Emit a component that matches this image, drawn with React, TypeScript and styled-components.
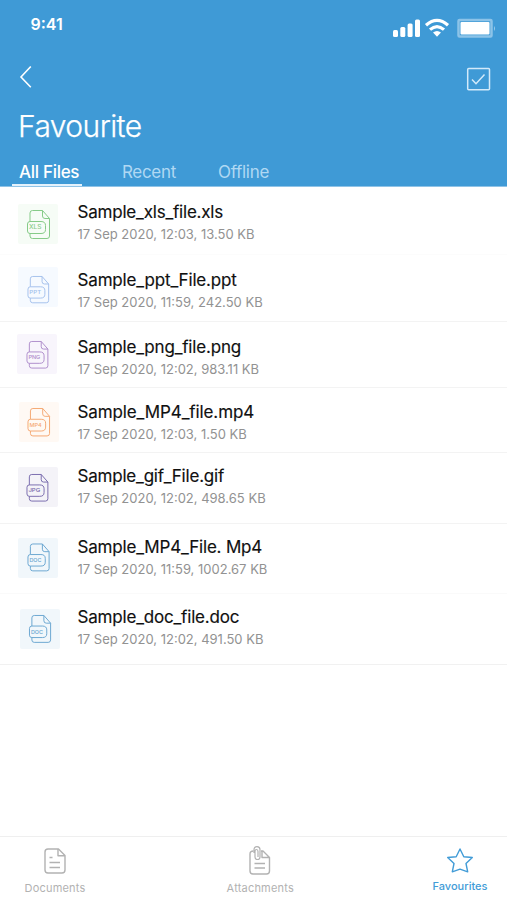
import React from "react";
import styled, { createGlobalStyle } from "styled-components";

const Global = createGlobalStyle`
  * { box-sizing: border-box; }
  body { margin: 0; background: #fff; font-family: Inter, "Liberation Sans", sans-serif; }
`;

const Screen = styled.div`
  width: 507px;
  height: 900px;
  display: flex;
  flex-direction: column;
  background: #fff;
  overflow: hidden;
`;
const Header = styled.header`
  height: 187px;
  flex: none;
  display: flex;
  flex-direction: column;
  background: #3f9ad6;
  border-bottom: 1px solid #8fc3e7;
  color: #fff;
`;
const StatusBar = styled.div`
  height: 48px;
  display: flex;
  justify-content: space-between;
  padding: 14px 11px 0 30.5px;
`;
const Time = styled.span`
  font-size: 16px;
  line-height: 20px;
  font-weight: 600;
`;
const StatusIcons = styled.svg`
  width: 104px;
  height: 24px;
  margin-top: 2px;
`;
const NavBar = styled.div`
  height: 58px;
  display: flex;
  justify-content: space-between;
  padding: 17px 15px 0 18px;
`;
const IconButton = styled.button`
  display: block;
  width: 28px;
  height: 28px;
  padding: 0;
  border: 0;
  background: none;
  color: inherit;
`;
const Heading = styled.h1`
  margin: 0;
  padding-left: 18px;
  height: 52px;
  font-size: 30px;
  line-height: 40px;
  font-weight: 300;
  -webkit-text-stroke: 0.25px #fff;
  letter-spacing: -0.57px;
`;
const Tabs = styled.nav`
  display: flex;
  height: 28px;
  padding-left: 12px;
`;
const Tab = styled.a<{ $active?: boolean; $width: number; $spacing: number }>`
  width: ${(p) => p.$width}px;
  height: 28px;
  padding-left: 7px;
  font-size: 17px;
  line-height: 28px;
  white-space: nowrap;
  font-weight: ${(p) => (p.$active ? 500 : 400)};
  letter-spacing: ${(p) => p.$spacing}px;
  color: ${(p) => (p.$active ? "#fff" : "#b0d8f3")};
  border-bottom: 2px solid ${(p) => (p.$active ? "#e4f2fc" : "transparent")};
  & + & { margin-left: 33px; }
`;
const List = styled.main`
  flex: 1;
`;
const Row = styled.article<{ $height: number; $line: string }>`
  height: ${(p) => p.$height}px;
  display: flex;
  border-bottom: 1px solid ${(p) => p.$line};
`;
const Tile = styled.div<{ $tint: string; $left: number; $top: number }>`
  flex: none;
  width: 40px;
  height: 40px;
  margin: ${(p) => p.$top}px ${(p) => 37.5 - p.$left}px 0 ${(p) => p.$left}px;
  background: ${(p) => p.$tint};
  border-radius: 2px;
  svg { display: block; }
`;
const Details = styled.div<{ $top: number }>`
  padding-top: ${(p) => p.$top}px;
  white-space: nowrap;
`;
const FileName = styled.div<{ $spacing: number }>`
  font-size: 17px;
  line-height: 22px;
  color: #101010;
  -webkit-text-stroke: 0.15px #101010;
  letter-spacing: ${(p) => p.$spacing}px;
`;
const Meta = styled.div`
  font-size: 13px;
  line-height: 22px;
  color: #929292;
`;
const BottomBar = styled.nav`
  height: 64px;
  flex: none;
  display: flex;
  justify-content: space-between;
  border-top: 1px solid #efefef;
  padding: 9px 12px 0 20px;
`;
const BarItem = styled.a<{ $active?: boolean }>`
  width: 70px;
  display: flex;
  flex-direction: column;
  align-items: center;
  font-size: 11px;
  line-height: 16px;
  letter-spacing: ${(p) => (p.$active ? 0 : 0.2)}px;
  font-weight: ${(p) => (p.$active ? 500 : 400)};
  color: ${(p) => (p.$active ? "#429cd7" : "#b2b2b2")};
  svg { display: block; margin-bottom: ${(p) => (p.$active ? 1 : 2.5)}px; }
  &:nth-child(2) { margin-left: 5.5px; }
`;

function FileIcon({ color, label, x, y, scale }: { color: string; label: string; x: number; y: number; scale: number }) {
  return (
    <svg width="40" height="40" viewBox="0 0 40 40" fill="none" stroke={color} strokeWidth="1" strokeLinejoin="round">
      <g transform={`translate(${x} ${y}) scale(${scale})`}>
        <path d="M3 11.500V3Q3 .5 5.500 .5H15.500L22.500 8.500V26Q22.500 28.500 20 28.500H5.500Q3 28.500 3 26V23.500" />
        <path d="M15.500 .5V6Q15.500 8.500 18 8.500H22.500" />
        <path d="M3 11.500Q.5 11.500 .5 14V21Q.5 23.500 3 23.500H14Q18.500 23.500 18.500 19.500V15.500Q18.500 11.500 14 11.500Z" />
        <text x="2" y="19.300" fontSize="5.500" fontFamily="Inter, sans-serif" fontWeight="500" textLength={12.5} lengthAdjust="spacingAndGlyphs" fill={color} stroke="none">{label}</text>
      </g>
    </svg>
  );
}

const files = [
  { name: "Sample_xls_file.xls", meta: "17 Sep 2020, 12:03, 13.50 KB", label: "XLS", color: "#86cb88", tint: "#f6fcf6", height: 68, line: "#fcfcfc", left: 18, tileTop: 17, top: 14, spacing: -0.2, icon: [9, 6, 1] },
  { name: "Sample_ppt_File.ppt", meta: "17 Sep 2020, 11:59, 242.50 KB", label: "PPT", color: "#a2bfec", tint: "#f6faff", height: 67, line: "#f3f3f3", left: 18, tileTop: 12, top: 14, spacing: -0.16, icon: [9.5, 9, 0.94] },
  { name: "Sample_png_file.png", meta: "17 Sep 2020, 12:02, 983.11 KB", label: "PNG", color: "#ad8bca", tint: "#f8f5fc", height: 66, line: "#f3f3f3", left: 17, tileTop: 12, top: 14, spacing: -0.18, icon: [9.5, 7, 0.95] },
  { name: "Sample_MP4_file.mp4", meta: "17 Sep 2020, 12:03, 1.50 KB", label: "MP4", color: "#f5a873", tint: "#fff9f4", height: 65, line: "#f3f3f3", left: 18.5, tileTop: 14, top: 13, spacing: -0.11, icon: [8.5, 6, 0.98] },
  { name: "Sample_gif_File.gif", meta: "17 Sep 2020, 12:02, 498.65 KB", label: "JPG", color: "#7668ac", tint: "#f4f3f8", height: 71, line: "#f3f3f3", left: 18, tileTop: 14, top: 12, spacing: -0.2, icon: [8.5, 7, 0.95] },
  { name: "Sample_MP4_File. Mp4", meta: "17 Sep 2020, 11:59, 1002.67 KB", label: "DOC", color: "#68a5d0", tint: "#f1f7fb", height: 70, line: "#fafafa", left: 18, tileTop: 14, top: 12, spacing: -0.18, icon: [9.5, 5.5, 0.96] },
  { name: "Sample_doc_file.doc", meta: "17 Sep 2020, 12:02, 491.50 KB", label: "DOC", color: "#68a5d0", tint: "#f1f7fb", height: 71, line: "#f1f1f1", left: 19.5, tileTop: 15, top: 12, spacing: -0.18, icon: [9, 6, 0.96] },
];

export default function App() {
  return (
    <>
      <Global />
      <Screen>
        <Header>
          <StatusBar>
            <Time>9:41</Time>
            <StatusIcons viewBox="392 16 104 24" fill="#fff">
              <rect x="393" y="30" width="5" height="7" rx="1.500" />
              <rect x="400.300" y="27" width="5" height="10" rx="1.500" />
              <rect x="407.600" y="23.500" width="5" height="13.500" rx="1.500" />
              <rect x="415" y="19.500" width="5" height="17.500" rx="1.500" />
              <g fill="none" stroke="#fff" strokeWidth="3.200">
                <path d="M426 25.200Q437 15.500 448 25.200" />
                <path d="M430 29.600Q437 23.500 444 29.600" />
              </g>
              <path d="M433 32.500Q437 29.500 441 32.500L437 36.700Z" />
              <rect x="458.500" y="20" width="33" height="16.500" rx="1" fill="none" stroke="#8cc3e8" strokeWidth="2.500" />
              <rect x="460.500" y="22" width="29" height="12.500" rx="1" />
              <path d="M494 26Q496 28.500 494 31Z" fill="#9acbeb" />
            </StatusIcons>
          </StatusBar>
          <NavBar>
            <IconButton aria-label="Back">
              <svg width="28" height="28" viewBox="0 0 28 28" fill="none" stroke="currentColor" strokeWidth="1.600">
                <path d="M12.800 1.500L3 12L12.800 22.200" />
              </svg>
            </IconButton>
            <IconButton aria-label="Select">
              <svg width="28" height="28" viewBox="0 0 28 28" fill="none" stroke="#d3eafa" strokeWidth="1.500">
                <rect x="3.700" y="3.400" width="21.800" height="21.400" rx="1" />
                <path d="M8 14.500L12 18.700L20.500 9.500" />
              </svg>
            </IconButton>
          </NavBar>
          <Heading>Favourite</Heading>
          <Tabs>
            <Tab $active $width={70} $spacing={-0.3}>All Files</Tab>
            <Tab $width={63} $spacing={-0.32}>Recent</Tab>
            <Tab $width={63} $spacing={-0.3}>Offline</Tab>
          </Tabs>
        </Header>
        <List>
          {files.map((f) => (
            <Row key={f.name} $height={f.height} $line={f.line}>
              <Tile $tint={f.tint} $left={f.left} $top={f.tileTop}>
                <FileIcon color={f.color} label={f.label} x={f.icon[0]} y={f.icon[1]} scale={f.icon[2]} />
              </Tile>
              <Details $top={f.top}>
                <FileName $spacing={f.spacing}>{f.name}</FileName>
                <Meta>{f.meta}</Meta>
              </Details>
            </Row>
          ))}
        </List>
        <BottomBar>
          <BarItem>
            <svg width="30" height="31" viewBox="0 0 30 31" fill="none" stroke="currentColor" strokeWidth="1.400" strokeLinejoin="round">
              <path d="M8 3H18.500L25 9.500V24Q25 27 22 27H8Q5 27 5 24V6Q5 3 8 3Z" />
              <path d="M18 3V9.800H25M9.500 11.500H12.500M9.500 16.500H20M9.500 21.500H20" />
            </svg>
            Documents
          </BarItem>
          <BarItem>
            <svg width="30" height="31" viewBox="0 0 30 31" fill="none" stroke="currentColor" strokeWidth="1.400" strokeLinejoin="round">
              <path d="M8.500 5Q5 5 5 8V25Q5 28 8 28H21.500Q24.500 28 24.500 25V11.500L18 5H16M17 5V11.500H24.500M9.500 17.500H20M9.500 22H20" />
              <path d="M9 7V3.800Q9 .7 12 .7T15 3.800V11Q15 13.500 12.500 13.500T10 11V5.500Q10 3.500 11.500 3.500T13 5.500V11" strokeWidth="1.200" />
            </svg>
            Attachments
          </BarItem>
          <BarItem $active>
            <svg width="30" height="31" viewBox="0 0 30 31" fill="none" stroke="currentColor" strokeWidth="1.400" strokeLinejoin="round">
              <path d="M15 3L18.800 10.800L27.300 11.500L21 17.500L22.700 25.800L15 23.200L7.300 25.800L9 17.500L2.700 11.500L11.200 10.800Z" />
            </svg>
            Favourites
          </BarItem>
        </BottomBar>
      </Screen>
    </>
  );
}
